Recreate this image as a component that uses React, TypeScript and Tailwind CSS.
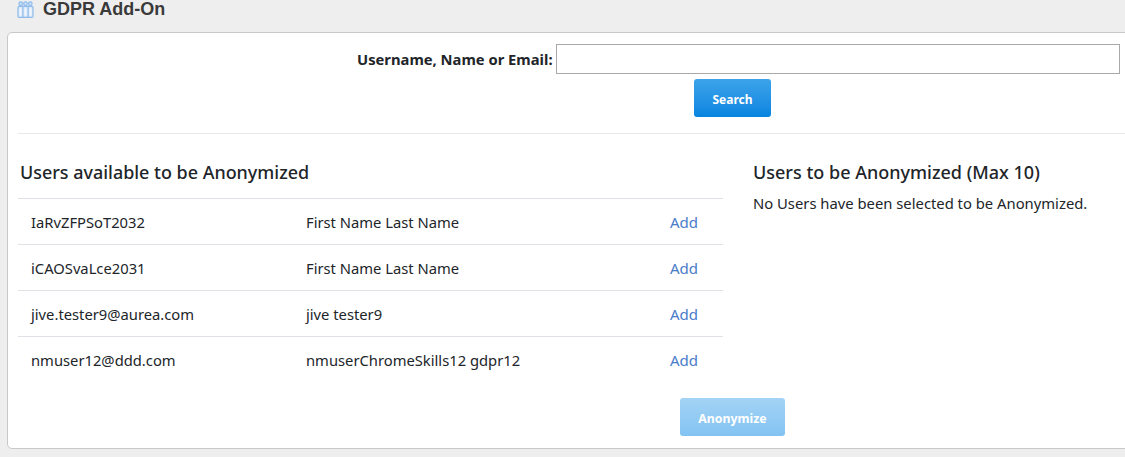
const users = [
  { username: 'IaRvZFPSoT2032', name: 'First Name Last Name' },
  { username: 'iCAOSvaLce2031', name: 'First Name Last Name' },
  { username: 'jive.tester9@aurea.com', name: 'jive tester9' },
  { username: 'nmuser12@ddd.com', name: 'nmuserChromeSkills12 gdpr12' },
];

function PeopleIcon() {
  return (
    <svg className="mt-[1px]" width="17" height="17" viewBox="0 0 17 17" fill="none" stroke="#8fbcec" strokeWidth="1.2">
      <rect x="2" y="0.8" width="3.4" height="3.6" rx="1.5" fill="#cfe2f6" />
      <rect x="6.8" y="0.8" width="3.4" height="3.6" rx="1.5" fill="#cfe2f6" />
      <rect x="11.6" y="0.8" width="3.4" height="3.6" rx="1.5" fill="#cfe2f6" />
      <path d="M1 15.2V6.6C1 5.8 1.5 5.4 2.2 5.4h12.6c.7 0 1.2.4 1.2 1.2v8.6c0 .7-.4 1.1-1.1 1.1H2.1c-.7 0-1.1-.4-1.1-1.1z" fill="#dbe9f8" />
      <path d="M5.9 5.4v11M11.1 5.4v11" />
      <path d="M3.4 7.5v7M8.5 7.5v7M13.6 7.5v7" stroke="#f4f8fd" strokeWidth="1.6" />
    </svg>
  );
}

export default function App() {
  return (
    <div className="w-[1125px] h-[457px] overflow-hidden bg-[#eeeeee] font-['Noto_Sans',sans-serif] text-[#212529]">
      <header className="h-[32px] pl-[17px] flex items-start gap-[9px]">
        <PeopleIcon />
        <h1 className="font-['Liberation_Sans',sans-serif] font-bold text-[18px] leading-[18px] text-[#3a3a3a]">GDPR Add-On</h1>
      </header>

      <main className="ml-[7px] w-[1130px] h-[417px] bg-white border border-[#c8c8c8] rounded-[5px] pt-[11px] pl-[10px]">
        <div className="flex items-center h-[30px] pl-[339px]">
          <label className="w-[199px] shrink-0 font-bold text-[14.75px] text-[#212529] whitespace-nowrap">Username, Name or Email:</label>
          <input className="w-[564px] h-[30px] border border-[#a9a9a9] bg-white outline-none" />
        </div>
        <div className="mt-[5px] ml-[676px]">
          <button className="w-[77px] h-[38px] pt-[3px] rounded-[3px] bg-gradient-to-b from-[#3ba3ea] to-[#0584e0] text-white font-bold text-[12px]">Search</button>
        </div>

        <hr className="mt-[16px] border-[#e8e8e8]" />

        <div className="flex mt-[23px]">
          <section className="w-[705px]">
            <h2 className="pl-[2px] h-[41px] text-[17.95px] leading-[31px] font-medium whitespace-nowrap">Users available to be Anonymized</h2>
            <div>
              {users.map((u) => (
                <div key={u.username} className="flex items-center h-[46px] pt-[2px] border-t border-[#dee2e6] text-[14.75px]">
                  <span className="w-[288px] pl-[13px] whitespace-nowrap">{u.username}</span>
                  <span className="flex-1 whitespace-nowrap">{u.name}</span>
                  <a href="#" className="mr-[25px] text-[15px] text-[#4a7cc9]">Add</a>
                </div>
              ))}
            </div>
          </section>
          <section className="ml-[30px]">
            <h2 className="h-[31px] text-[18px] leading-[31px] font-medium whitespace-nowrap">Users to be Anonymized (Max 10)</h2>
            <p className="text-[14.8px] leading-[30px] whitespace-nowrap">No Users have been selected to be Anonymized.</p>
          </section>
        </div>

        <div className="mt-[16px] ml-[662px]">
          <button disabled className="w-[105px] h-[38px] pt-[4px] rounded-[3px] bg-gradient-to-b from-[#a3d3f5] to-[#83c3f2] text-white font-bold text-[12.3px]">Anonymize</button>
        </div>
      </main>
    </div>
  );
}
